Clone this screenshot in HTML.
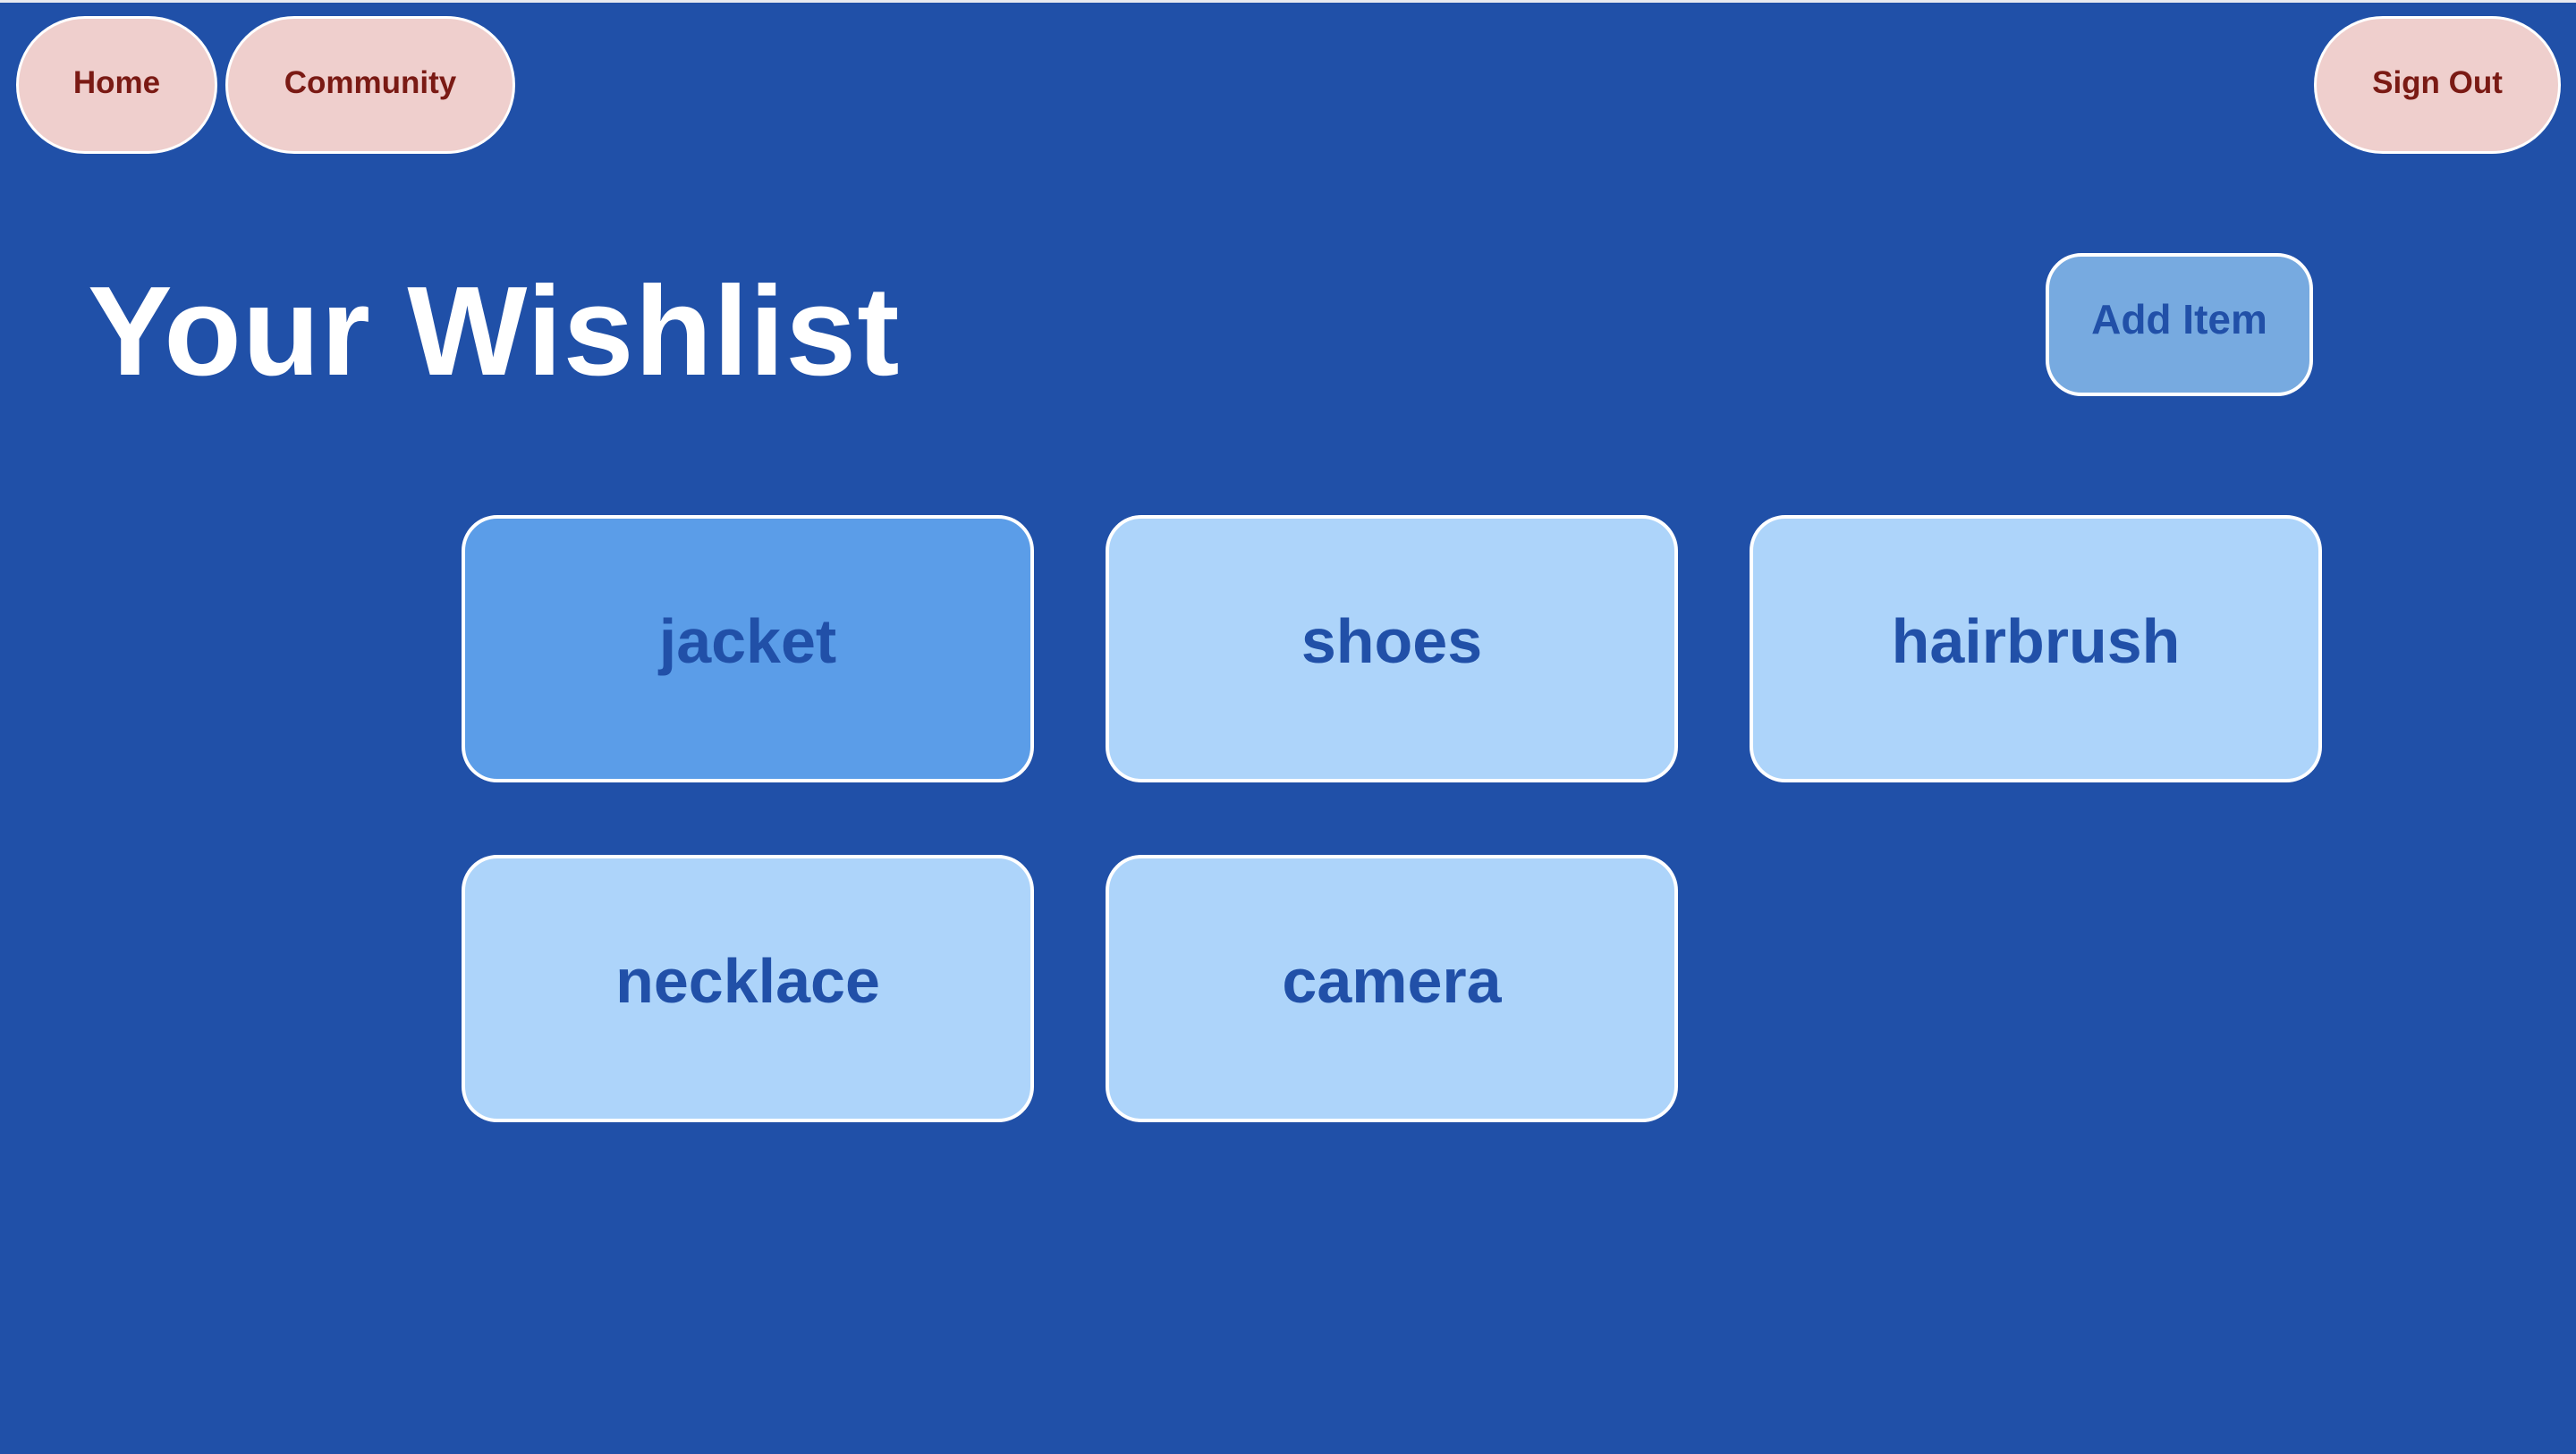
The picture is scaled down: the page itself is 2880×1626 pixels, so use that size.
<!DOCTYPE html>
<html><head><meta charset="utf-8"><style>
html,body{margin:0;padding:0;}
body{width:2880px;height:1626px;background:#2050a8;position:relative;overflow:hidden;font-family:"Liberation Sans",sans-serif;}
.topline{position:absolute;left:0;top:0;width:2880px;height:3px;background:#e8eaf0;}
.nav{position:absolute;top:18px;height:154px;box-sizing:border-box;border:3px solid #fff;border-radius:80px;background:#efcfcd;color:#7a1a14;font-weight:bold;font-size:35px;display:flex;align-items:center;justify-content:center;padding-bottom:4px;}
.title{position:absolute;left:98px;top:300px;font-size:142px;font-weight:bold;color:#fff;line-height:1;letter-spacing:1px;}
.add{position:absolute;left:2287px;top:283px;width:299px;height:160px;box-sizing:border-box;border:4px solid #fff;border-radius:40px;background:#77aae0;color:#2150a8;font-weight:bold;font-size:46px;display:flex;align-items:center;justify-content:center;padding-bottom:12px;}
.card{position:absolute;width:640px;height:299px;box-sizing:border-box;border:4px solid #fff;border-radius:40px;background:#add4fa;color:#2150a8;font-weight:bold;font-size:70px;display:flex;align-items:center;justify-content:center;padding-bottom:18px;}
</style></head><body>
<div class="topline"></div>
<div class="nav" style="left:18px;width:225px;">Home</div>
<div class="nav" style="left:252px;width:324px;">Community</div>
<div class="nav" style="left:2587px;width:276px;">Sign Out</div>
<div class="title">Your Wishlist</div>
<div class="add">Add Item</div>
<div class="card" style="left:516px;top:576px;background:#5b9de8;">jacket</div>
<div class="card" style="left:1236px;top:576px;">shoes</div>
<div class="card" style="left:1956px;top:576px;">hairbrush</div>
<div class="card" style="left:516px;top:956px;">necklace</div>
<div class="card" style="left:1236px;top:956px;">camera</div>
</body></html>
